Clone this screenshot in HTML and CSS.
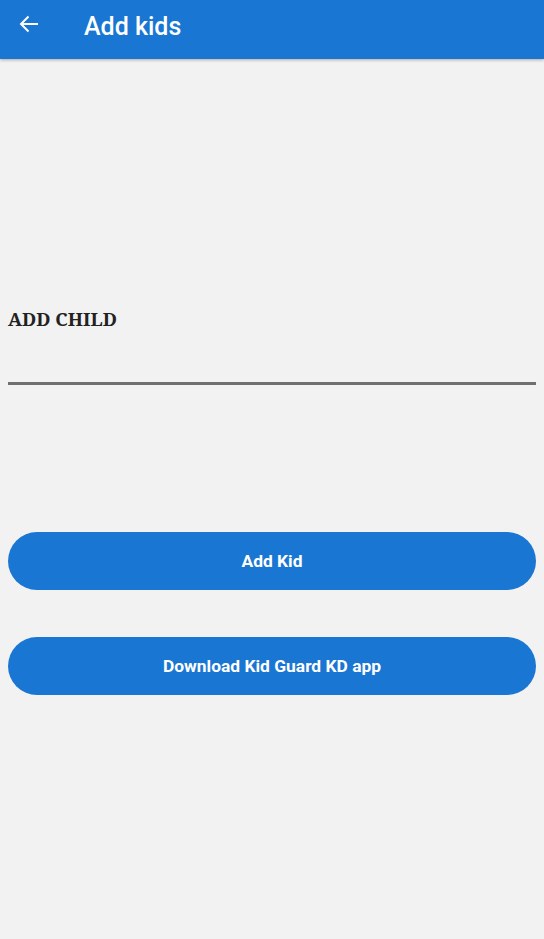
FILE: index.html
```html
<!DOCTYPE html>
<html>
<head>
<meta charset="utf-8">
<link rel="stylesheet" href="styles.css">
</head>
<body>
<header class="appbar">
  <button class="back" aria-label="Back">
    <svg width="20" height="18" viewBox="0 0 20 18"><path d="M19 9H2M9.5 1.5L2 9l7.5 7.5" fill="none" stroke="#fff" stroke-width="2"/></svg>
  </button>
  <h1 class="title">Add kids</h1>
</header>
<main class="content">
  <label class="field">
    <span class="label">ADD CHILD</span>
    <span class="input"></span>
  </label>
  <div class="actions">
    <button class="btn">Add Kid</button>
    <button class="btn">Download Kid Guard KD app</button>
  </div>
</main>
</body>
</html>
```
FILE: styles.css
```css
html, body {
  margin: 0;
  padding: 0;
  background: #f2f2f2;
  font-family: Roboto, "Liberation Sans", sans-serif;
  height: 100%;
}
.appbar {
  height: 59px;
  box-sizing: border-box;
  padding-bottom: 6px;
  background: #1976d2;
  display: flex;
  align-items: center;
  box-shadow: 0 1px 3px rgba(0,0,0,0.3);
  position: relative;
}
.back {
  background: none;
  border: 0;
  padding: 0;
  margin: 0 0 6px 19px;
  width: 20px;
  height: 18px;
  display: flex;
}
.title {
  margin: 0 0 0 45px;
  color: #fff;
  font-size: 25px;
  font-weight: 500;
  line-height: 30px;
}
.content {
  padding: 0 8px;
}
.field {
  display: flex;
  flex-direction: column;
  padding-top: 248px;
}
.label {
  font-family: "Noto Serif", "DejaVu Serif", serif;
  font-weight: bold;
  font-size: 18.6px;
  color: #222;
  line-height: 24px;
}
.input {
  margin-top: 51px;
  height: 3px;
  background: #6f6f6f;
}
.actions {
  display: flex;
  flex-direction: column;
  gap: 47px;
  margin-top: 147px;
}
.btn {
  height: 58px;
  border-radius: 29px;
  border: 0;
  background: #1976d2;
  color: #fff;
  font-family: Roboto, sans-serif;
  font-weight: bold;
  font-size: 17.4px;
}
```
